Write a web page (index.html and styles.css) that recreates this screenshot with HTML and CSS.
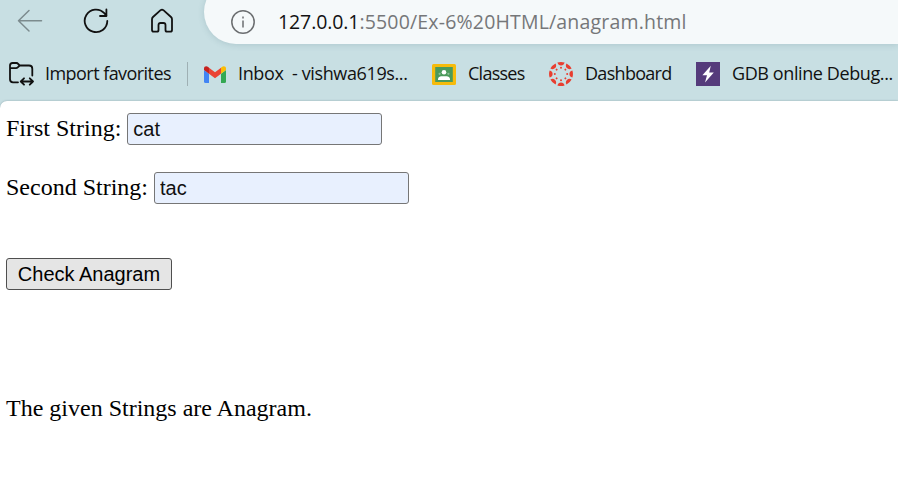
FILE: index.html
```html
<!DOCTYPE html>
<html lang="en">
<head>
<meta charset="utf-8">
<title>Anagram</title>
<link rel="stylesheet" href="styles.css">
</head>
<body>
<header class="chrome">
  <div class="toolbar">
    <svg class="icon back" width="26" height="26" viewBox="0 0 26 26"><path d="M24.5 12.7H1.5M12 2.5L1.5 12.7L12 23"/></svg>
    <svg class="icon reload" width="26" height="26" viewBox="0 0 26 26"><path d="M24.3 13A11.3 11.3 0 1 1 21.3 5.2L23.5 7.8M23.4 1.5V8H17"/></svg>
    <svg class="icon home" width="24" height="26" viewBox="0 0 24 26"><path d="M2 11.2Q2 9.9 3 9L10.6 2.2Q12 1.1 13.4 2.2L21 9Q22 9.9 22 11.2V22Q22 23.7 20.3 23.7H17Q15.5 23.7 15.5 22V17Q15.5 15 13.5 15H10.5Q8.5 15 8.5 17V22Q8.5 23.7 7 23.7H3.7Q2 23.7 2 22Z"/></svg>
    <div class="address">
      <svg class="icon info" width="26" height="26" viewBox="0 0 26 26"><circle cx="13" cy="13" r="11.2"/><path d="M13 11.5V18.5M13 7.5V9.5"/></svg>
      <span class="url"><b>127.0.0.1</b>:5500/Ex-6%20HTML/anagram.html</span>
    </div>
  </div>
  <nav class="favorites">
    <svg class="icon folder" width="26" height="26" viewBox="0 0 26 26"><path d="M10 21.3H5Q2 21.3 2 18.3V4.5Q2 2 4.5 2H8.5Q9.5 2 10.2 3L11.7 4.5H21Q24.3 4.5 24.3 7.8V14.5M2 7.2H8Q9 7.2 10 6.2L11.7 4.5M13 20.5H25M16 17.3L12.8 20.5L16 23.7M21.8 17.3L25 20.5L21.8 23.7"/></svg>
    <span class="label import">Import favorites</span>
    <i class="divider"></i>
    <svg class="gmail" width="22" height="17" viewBox="0 0 22 17"><path fill="#4285f4" d="M0 4L5 7.7V17H1.5Q0 17 0 15.5Z"/><path fill="#34a853" d="M17 7.7L22 4V15.5Q22 17 20.5 17H17Z"/><path fill="#ea4335" d="M5 1.7L11 6.3L17 1.7V7.7L11 12.2L5 7.7Z"/><path fill="#c5221f" d="M0 4V2.5C0 .2 2.4-.6 4.2.9L5 1.7V7.7Z"/><path fill="#fbbc04" d="M22 4V2.5C22 .2 19.6-.6 17.8.9L17 1.7V7.7Z"/></svg>
    <span class="label inbox">Inbox&nbsp; - vishwa619s...</span>
    <svg class="classroom" width="24" height="21" viewBox="0 0 24 21"><rect width="24" height="21" rx="1.5" fill="#f6bb0b"/><rect x="3.2" y="3" width="17.6" height="15" fill="#4b9a5b"/><circle cx="12" cy="8.2" r="2.3" fill="#fff"/><path fill="#fff" d="M6 16V14.5Q6.5 12.8 9 12.3H15Q17.5 12.8 18 14.5V16Z"/><circle cx="7.6" cy="9.8" r="1.1" fill="#8bc095"/><circle cx="16.4" cy="9.8" r="1.1" fill="#8bc095"/></svg>
    <span class="label classes">Classes</span>
    <svg class="canvas" width="24" height="24" viewBox="-12 -12 24 24">
      <defs><g id="seg"><path d="M-3.6-11.4A12 12 0 0 1 3.6-11.4Q2.8-8.4 0-8.4T-3.6-11.4Z"/><circle cy="-6.2" r="1"/></g></defs>
      <g fill="#e83e30"><use href="#seg"/><use href="#seg" transform="rotate(45)"/><use href="#seg" transform="rotate(90)"/><use href="#seg" transform="rotate(135)"/><use href="#seg" transform="rotate(180)"/><use href="#seg" transform="rotate(225)"/><use href="#seg" transform="rotate(270)"/><use href="#seg" transform="rotate(315)"/></g>
    </svg>
    <span class="label dashboard">Dashboard</span>
    <svg class="gdb" width="24" height="24" viewBox="0 0 24 24"><path fill="#553b7b" d="M0 0H24V24H0Z"/><path fill="#fff" d="M14.8 3.8L6.4 13.2H11L9 20.6L17.8 10.6H13.2Z"/></svg>
    <span class="label debug">GDB online Debug...</span>
  </nav>
</header>
<main class="page">
  <label class="row">First String: <input type="text" value="cat"></label>
  <label class="row">Second String: <input type="text" value="tac"></label>
  <button type="button">Check Anagram</button>
  <p class="result">The given Strings are Anagram.</p>
</main>
</body>
</html>
```
FILE: styles.css
```css
* { box-sizing: border-box; }
body { margin: 0; height: 496px; overflow: hidden; background: #c8dfe3; font-family: "Liberation Serif", serif; }
.chrome { height: 101px; font-family: "Open Sans", "Noto Sans", sans-serif; }
.toolbar { display: flex; height: 44px; padding-left: 17px; }
.icon { flex: none; fill: none; stroke: #111; stroke-width: 1.8; stroke-linecap: round; stroke-linejoin: round; }
.back { margin-top: 8px; stroke: #7c8b8e; stroke-width: 1.5; }
.reload { margin: 8px 0 0 40px; }
.home { margin: 8px 0 0 41px; }
.address { display: flex; flex: 1; height: 64px; margin: -20px 0 0 30px; padding: 20px 0 0 26px; border-radius: 32px 0 0 32px; background: #f5f9fa; box-shadow: 0 1px 6px rgba(70, 110, 120, .2); }
.info { margin-top: 9px; stroke: #6b6e70; stroke-width: 1.5; stroke-linecap: butt; }
.url { margin-left: 22px; font-size: 19.5px; line-height: 43px; color: #757779; white-space: pre; letter-spacing: .18px; }
.url b { font-weight: 400; color: #111; letter-spacing: -.1px; }
.favorites { display: flex; align-items: center; height: 57px; padding: 3px 0 0 8px; }
.favorites > * { flex: none; }
.label { font-size: 18px; line-height: 24px; padding-bottom: 2px; color: #111; white-space: pre; letter-spacing: -.55px; }
.import { width: 126px; margin-left: 11px; }
.divider { width: 1px; height: 24px; margin: 0 16px; background: #9fb0b4; }
.inbox { width: 170px; margin-left: 12px; letter-spacing: -.38px; }
.classroom { margin-left: 24px; }
.classes { width: 57px; margin-left: 12px; letter-spacing: -.75px; }
.canvas { margin-left: 24px; }
.dashboard { width: 87px; margin-left: 12px; letter-spacing: -.7px; }
.gdb { margin-left: 24px; }
.debug { margin-left: 12px; letter-spacing: -.4px; }
.page { height: 395px; padding: 12px 6px 0; border-radius: 7px 0 0 0; background: #fff; box-shadow: 0 0 2px rgba(70, 100, 110, .5); font-size: 24px; color: #000; }
.row { display: flex; align-items: center; gap: 6px; height: 32px; margin-bottom: 27px; line-height: 30px; padding-bottom: 0; align-items: flex-start; }
input { width: 255px; height: 32px; padding: 0 5px; border: 1px solid #767676; border-radius: 3px; background: #e8f0fe; font: 20px "Liberation Sans", sans-serif; color: #111; }
button { display: block; width: 166px; height: 32px; margin-top: 54px; padding: 0; border: 1px solid #4f4f4f; border-radius: 3px; background: #e5e5e5; font: 20px "Liberation Sans", sans-serif; color: #000; }
.result { margin: 104px 0 0; line-height: 28px; }
```
